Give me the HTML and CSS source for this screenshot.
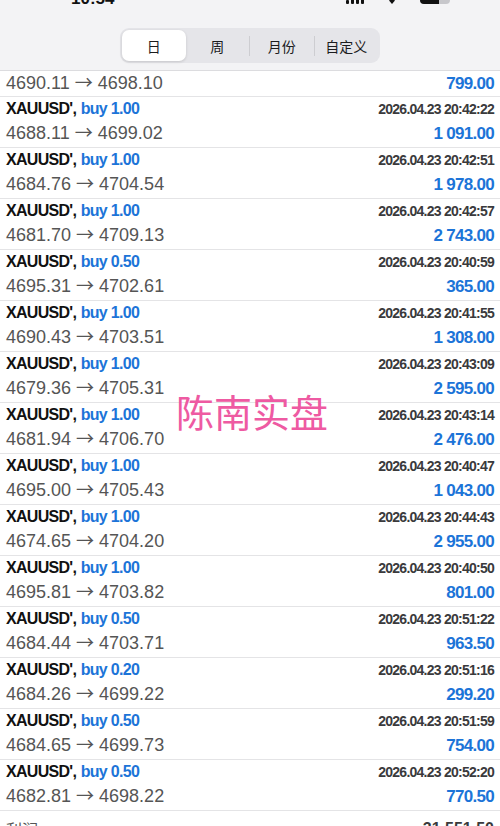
FILE: index.html
```html
<!DOCTYPE html>
<html lang="zh-CN">
<head>
    <meta charset="UTF-8">
    <meta name="viewport" content="width=device-width, initial-scale=1.0">
    <title>历史</title>
    <link rel="stylesheet" href="styles.css">
</head>
<body>
    <div class="topbar">
        <div class="status">
            <span class="time">10:54</span>
            <div class="status-icons">
                <svg class="signal" width="18" height="12" viewBox="0 0 18 12">
                    <rect x="0" y="8" width="3" height="4" rx="1"/>
                    <rect x="5" y="5" width="3" height="7" rx="1"/>
                    <rect x="10" y="2" width="3" height="10" rx="1"/>
                    <rect x="15" y="0" width="3" height="12" rx="1"/>
                </svg>
                <svg class="wifi" width="16" height="12" viewBox="0 0 16 12">
                    <path d="M8 12 L5 8.6 A4.6 4.6 0 0 1 11 8.6 Z"/>
                </svg>
                <div class="battery"><div class="battery-level"></div></div>
            </div>
        </div>
        <div class="segmented">
            <div class="seg active">日</div>
            <div class="seg">周</div>
            <span class="divider"></span>
            <div class="seg">月份</div>
            <span class="divider"></span>
            <div class="seg">自定义</div>
        </div>
    </div>

    <div class="list">
        <div class="row partial">
            <div class="line">
                <span class="price">4690.11 <span class="arrow">→</span> 4698.10</span>
                <span class="profit">799.00</span>
            </div>
        </div>

        <div class="row">
            <div class="line head"><span><b class="sym">XAUUSD',</b> <b class="lot">buy 1.00</b></span><span class="date">2026.04.23 20:42:22</span></div>
            <div class="line"><span class="price">4688.11 <span class="arrow">→</span> 4699.02</span><span class="profit">1 091.00</span></div>
        </div>
        <div class="row">
            <div class="line head"><span><b class="sym">XAUUSD',</b> <b class="lot">buy 1.00</b></span><span class="date">2026.04.23 20:42:51</span></div>
            <div class="line"><span class="price">4684.76 <span class="arrow">→</span> 4704.54</span><span class="profit">1 978.00</span></div>
        </div>
        <div class="row">
            <div class="line head"><span><b class="sym">XAUUSD',</b> <b class="lot">buy 1.00</b></span><span class="date">2026.04.23 20:42:57</span></div>
            <div class="line"><span class="price">4681.70 <span class="arrow">→</span> 4709.13</span><span class="profit">2 743.00</span></div>
        </div>
        <div class="row">
            <div class="line head"><span><b class="sym">XAUUSD',</b> <b class="lot">buy 0.50</b></span><span class="date">2026.04.23 20:40:59</span></div>
            <div class="line"><span class="price">4695.31 <span class="arrow">→</span> 4702.61</span><span class="profit">365.00</span></div>
        </div>
        <div class="row">
            <div class="line head"><span><b class="sym">XAUUSD',</b> <b class="lot">buy 1.00</b></span><span class="date">2026.04.23 20:41:55</span></div>
            <div class="line"><span class="price">4690.43 <span class="arrow">→</span> 4703.51</span><span class="profit">1 308.00</span></div>
        </div>
        <div class="row">
            <div class="line head"><span><b class="sym">XAUUSD',</b> <b class="lot">buy 1.00</b></span><span class="date">2026.04.23 20:43:09</span></div>
            <div class="line"><span class="price">4679.36 <span class="arrow">→</span> 4705.31</span><span class="profit">2 595.00</span></div>
        </div>
        <div class="row">
            <div class="line head"><span><b class="sym">XAUUSD',</b> <b class="lot">buy 1.00</b></span><span class="date">2026.04.23 20:43:14</span></div>
            <div class="line"><span class="price">4681.94 <span class="arrow">→</span> 4706.70</span><span class="profit">2 476.00</span></div>
        </div>
        <div class="row">
            <div class="line head"><span><b class="sym">XAUUSD',</b> <b class="lot">buy 1.00</b></span><span class="date">2026.04.23 20:40:47</span></div>
            <div class="line"><span class="price">4695.00 <span class="arrow">→</span> 4705.43</span><span class="profit">1 043.00</span></div>
        </div>
        <div class="row">
            <div class="line head"><span><b class="sym">XAUUSD',</b> <b class="lot">buy 1.00</b></span><span class="date">2026.04.23 20:44:43</span></div>
            <div class="line"><span class="price">4674.65 <span class="arrow">→</span> 4704.20</span><span class="profit">2 955.00</span></div>
        </div>
        <div class="row">
            <div class="line head"><span><b class="sym">XAUUSD',</b> <b class="lot">buy 1.00</b></span><span class="date">2026.04.23 20:40:50</span></div>
            <div class="line"><span class="price">4695.81 <span class="arrow">→</span> 4703.82</span><span class="profit">801.00</span></div>
        </div>
        <div class="row">
            <div class="line head"><span><b class="sym">XAUUSD',</b> <b class="lot">buy 0.50</b></span><span class="date">2026.04.23 20:51:22</span></div>
            <div class="line"><span class="price">4684.44 <span class="arrow">→</span> 4703.71</span><span class="profit">963.50</span></div>
        </div>
        <div class="row">
            <div class="line head"><span><b class="sym">XAUUSD',</b> <b class="lot">buy 0.20</b></span><span class="date">2026.04.23 20:51:16</span></div>
            <div class="line"><span class="price">4684.26 <span class="arrow">→</span> 4699.22</span><span class="profit">299.20</span></div>
        </div>
        <div class="row">
            <div class="line head"><span><b class="sym">XAUUSD',</b> <b class="lot">buy 0.50</b></span><span class="date">2026.04.23 20:51:59</span></div>
            <div class="line"><span class="price">4684.65 <span class="arrow">→</span> 4699.73</span><span class="profit">754.00</span></div>
        </div>
        <div class="row">
            <div class="line head"><span><b class="sym">XAUUSD',</b> <b class="lot">buy 0.50</b></span><span class="date">2026.04.23 20:52:20</span></div>
            <div class="line"><span class="price">4682.81 <span class="arrow">→</span> 4698.22</span><span class="profit">770.50</span></div>
        </div>

        <div class="summary">
            <span class="summary-label">利润</span>
            <span class="summary-value">31 551.50</span>
        </div>

        <div class="watermark">陈南实盘</div>
    </div>
</body>
</html>
```

FILE: styles.css
```css
body {
    margin: 0;
    font-family: "Liberation Sans", Arial, "Noto Sans CJK SC", sans-serif;
    background-color: #fff;
    color: #111;
}
.topbar {
    background-color: #f3f3f5;
    border-bottom: 1px solid #dcdcdf;
    padding-bottom: 7px;
}
.status {
    height: 5px;
    overflow: hidden;
    display: flex;
    align-items: flex-end;
    justify-content: space-between;
    padding: 0 50px 0 71px;
}
.time {
    font-size: 17px;
    font-weight: bold;
    line-height: 20px;
    margin-bottom: -4px;
}
.status-icons {
    display: flex;
    align-items: flex-end;
    gap: 20px;
    margin-bottom: 1px;
}
.signal, .wifi {
    fill: #111;
}
.battery {
    width: 30px;
    height: 13px;
    border-radius: 4px;
    background-color: #c7c7cb;
    overflow: hidden;
}
.battery-level {
    width: 19px;
    height: 100%;
    background-color: #111;
}
.segmented {
    width: 260px;
    height: 35px;
    margin: 23px auto 0;
    display: flex;
    align-items: center;
    box-sizing: border-box;
    padding: 2px;
    background-color: #e5e5e9;
    border-radius: 9px;
}
.seg {
    flex: 1;
    height: 100%;
    display: flex;
    align-items: center;
    justify-content: center;
    font-family: "Noto Sans CJK SC", sans-serif;
    font-size: 14px;
    color: #1c1c1e;
}
.seg.active {
    background-color: #fff;
    border-radius: 7px;
    box-shadow: 0 1px 3px rgba(0, 0, 0, 0.14);
}
.divider {
    width: 1px;
    height: 20px;
    background-color: #cdcdd1;
}
.list {
    position: relative;
}
.row {
    padding: 2px 6px 3px;
    border-bottom: 1px solid #e4e4e6;
    display: flex;
    flex-direction: column;
    gap: 3px;
}
.row.partial {
    padding: 1px 6px 2px;
}
.line {
    display: flex;
    justify-content: space-between;
    align-items: baseline;
    height: 22px;
    line-height: 22px;
}
.line.head {
    height: 20px;
    line-height: 20px;
}
.sym {
    font-size: 16px;
    color: #111;
    letter-spacing: -0.7px;
}
.lot {
    font-size: 16px;
    color: #1c74d8;
    letter-spacing: -0.7px;
}
.date {
    font-size: 14px;
    font-weight: bold;
    color: #3a3a3c;
    letter-spacing: -0.75px;
}
.price {
    font-size: 18px;
    color: #555;
}
.arrow {
    font-family: "Noto Sans CJK SC", sans-serif;
    font-size: 18px;
    line-height: 0;
}
.profit {
    font-size: 17px;
    font-weight: bold;
    color: #1c74d8;
    letter-spacing: -0.7px;
}
.summary {
    display: flex;
    justify-content: space-between;
    padding: 8px 6px 0;
    font-size: 16px;
    line-height: 20px;
    color: #555;
}
.summary-label {
    font-family: "Noto Sans CJK SC", sans-serif;
}
.summary-value {
    font-weight: bold;
    color: #3a3a3c;
}
.watermark {
    position: absolute;
    left: 176px;
    top: 321px;
    font-family: "Noto Sans CJK SC", sans-serif;
    font-size: 38px;
    line-height: 1;
    color: #ee5aa2;
    white-space: nowrap;
}
```
